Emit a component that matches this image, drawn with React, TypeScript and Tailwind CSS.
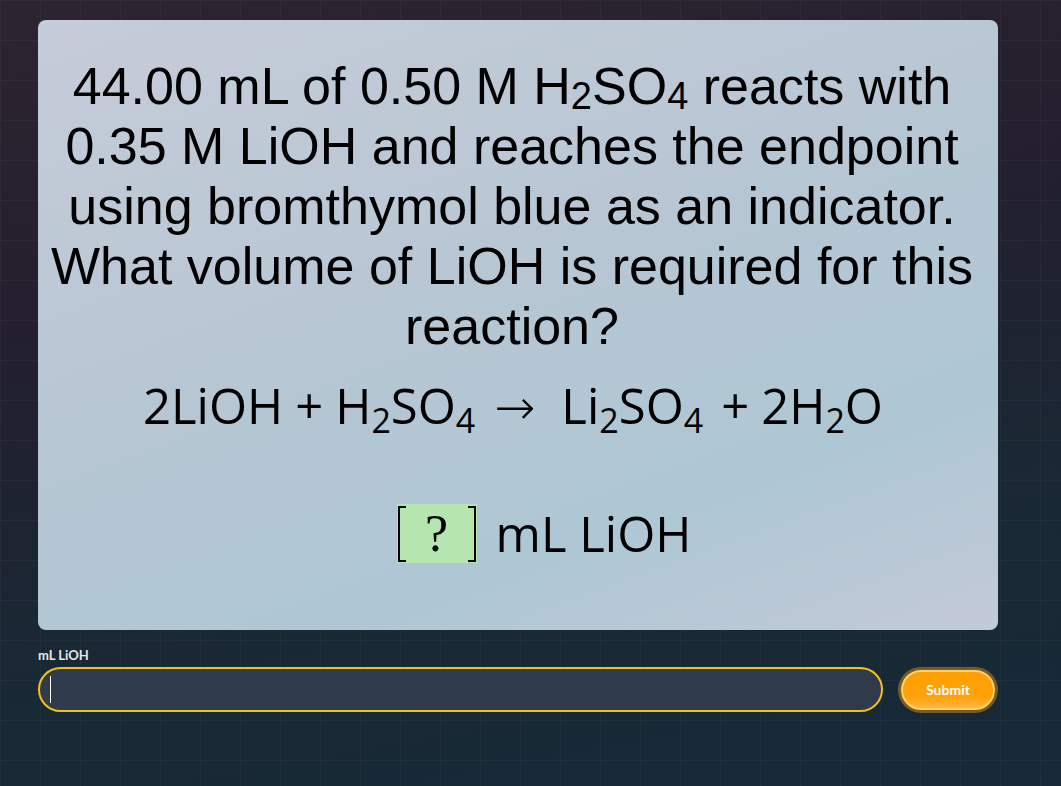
const eqFont = { fontFamily: '"Open Sans", "Noto Sans", sans-serif', fontWeight: 400 };

function Sub({ children }: { children: string }) {
  return <span className="relative top-[9px] text-[34px] leading-none">{children}</span>;
}

export default function App() {
  return (
    <div
      className="relative min-h-[786px] w-full overflow-hidden bg-[linear-gradient(170deg,#2d2430_0%,#231f2e_35%,#1a2835_70%,#162a37_100%)]"
      style={{ fontFamily: '"Liberation Sans", Arial, sans-serif' }}
    >
      <div className="pointer-events-none absolute inset-0 bg-[linear-gradient(rgba(255,255,255,0.03)_1px,transparent_1px),linear-gradient(90deg,rgba(255,255,255,0.03)_1px,transparent_1px)] bg-[size:40px_40px]" />

      <div className="relative ml-[38px] flex w-[960px] flex-col pt-[20px]">
        {/* question card */}
        <div className="flex h-[610px] flex-col items-center rounded-lg bg-[linear-gradient(160deg,#c6ccd9_0%,#b7c6d3_45%,#aec7d4_75%,#c3c9d8_100%)] pl-[6px] pr-[18px] pt-[36px]">
          <p className="text-center text-[52px] leading-[60px] text-black">
            44.00 mL of 0.50 M H
            <span className="relative top-[5px] text-[38px] leading-none">2</span>SO
            <span className="relative top-[5px] text-[38px] leading-none">4</span> reacts with 0.35
            M LiOH and reaches the endpoint using bromthymol blue as an indicator. What volume of
            LiOH is required for this reaction?
          </p>

          <div className="mt-[25px] flex items-baseline pl-[2px] text-[49px] leading-none text-black" style={eqFont}>
            <span>2LiOH</span>
            <span className="mx-[12px]">+</span>
            <span>
              H<Sub>2</Sub>SO<Sub>4</Sub>
            </span>
            <span
              className="ml-[19px] mr-[26px]"
              style={{ fontFamily: '"DejaVu Sans", sans-serif', fontWeight: 300 }}
            >
              →
            </span>
            <span>
              Li<Sub>2</Sub>SO<Sub>4</Sub>
            </span>
            <span className="ml-[18px] mr-[12px]">+</span>
            <span>
              2H<Sub>2</Sub>O
            </span>
          </div>

          <div className="mt-[72px] flex items-center pl-[64px] text-[49px] leading-none text-black" style={eqFont}>
            <span className="flex h-[59px] w-[80px] items-center justify-between bg-[#b6e6b0] px-[1px]">
              <span className="h-[56px] w-[8px] border-y-2 border-l-2 border-black" />
              <span
                className="text-[52px] leading-none"
                style={{ fontFamily: '"Liberation Serif", serif', fontWeight: 400 }}
              >
                ?
              </span>
              <span className="h-[56px] w-[8px] border-y-2 border-r-2 border-black" />
            </span>
            <span className="ml-[19px]">mL LiOH</span>
          </div>
        </div>

        {/* answer row */}
        <label
          className="mt-[18px] text-[13px] font-bold leading-[14px] text-[#e5e7eb]"
          style={{ fontFamily: '"Lato", sans-serif' }}
        >
          mL LiOH
        </label>
        <div className="mt-[5px] flex items-center gap-[18px] pr-[3px]">
          <div className="flex h-[45px] flex-1 items-center rounded-full border-2 border-[#f0c020] bg-[#2f3a4b] pl-[10px]">
            <span className="h-[27px] w-[1px] bg-white" />
          </div>
          <button
            className="h-[40px] w-[94px] rounded-full border-2 border-[#ffd36a] bg-[linear-gradient(180deg,#ff9f00_0%,#ffa20a_70%,#ffb545_100%)] text-[14px] font-bold text-white shadow-[0_0_0_3px_#7a5a25]"
            style={{ fontFamily: '"Lato", sans-serif' }}
          >
            Submit
          </button>
        </div>
      </div>
    </div>
  );
}
